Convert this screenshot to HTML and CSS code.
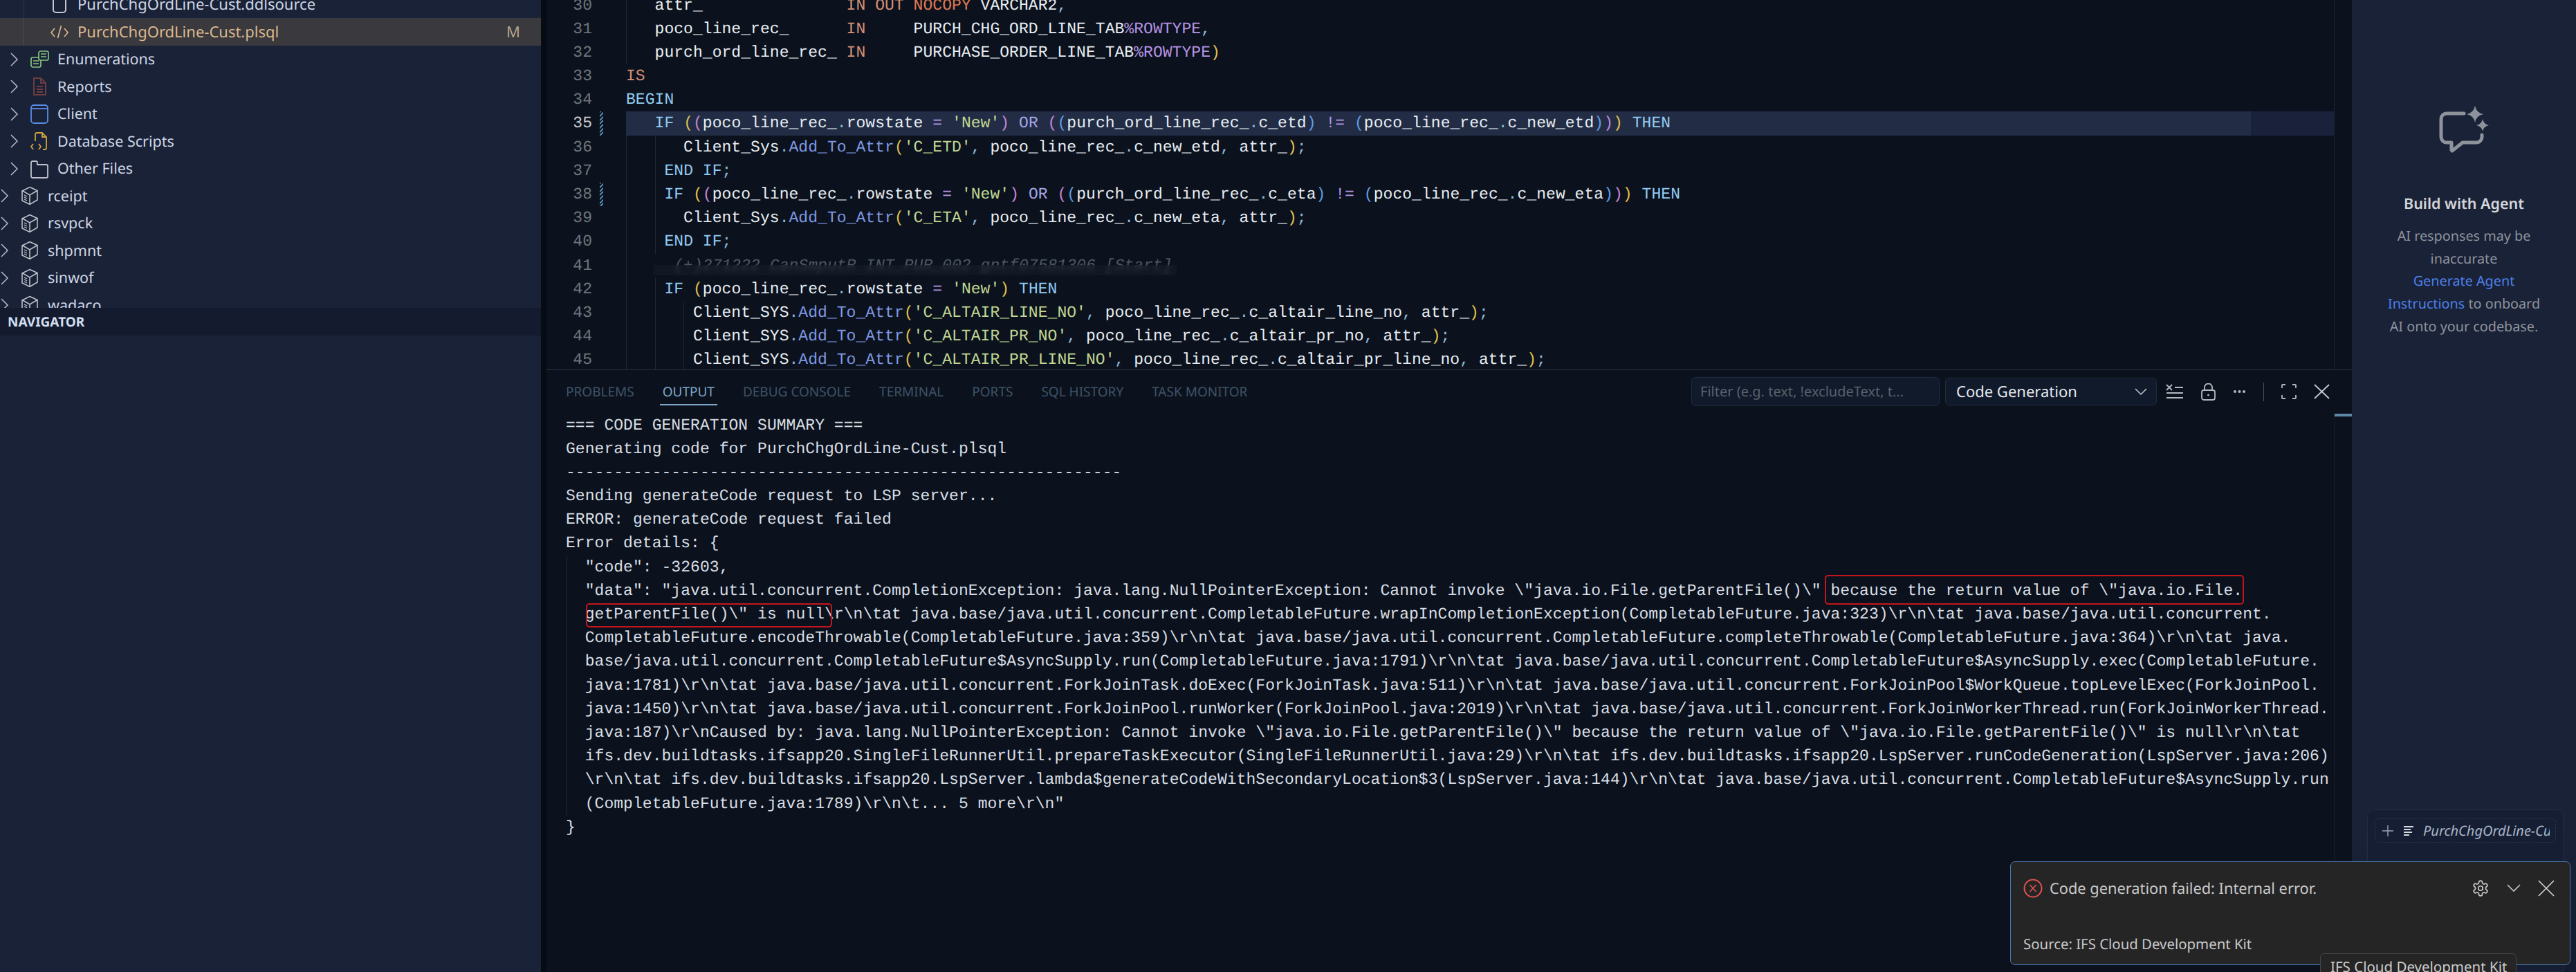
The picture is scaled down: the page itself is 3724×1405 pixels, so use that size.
FILE: index.html
```html
<!DOCTYPE html>
<html lang="en">
<head>
    <meta charset="UTF-8">
    <title>PurchChgOrdLine-Cust.plsql - Output</title>
    <link rel="stylesheet" href="styles.css">
</head>
<body>
    <svg class="icon-defs" width="0" height="0">
        <symbol id="chev" viewBox="0 0 14 20"><path d="M2 1l9 9-9 9" fill="none" stroke="currentColor" stroke-width="1.5"/></symbol>
        <symbol id="cube" viewBox="0 0 28 28" fill="none" stroke="currentColor" stroke-width="1.5"><path d="M14 1.500l11 5v13.500l-11 6.500-11-5.500v-14z"/><path d="M3 6.500l11 6.500 11-6.500M14 13v13.500"/><path d="M6 13l4 2M6 16l4 2M6 19l4 2" stroke-width="1.200"/></symbol>
    </svg>

    <div class="app">
        <!-- explorer -->
        <aside class="sidebar">
            <div class="tree">
                <div class="row file first"><svg class="tree-icon" viewBox="0 0 28 28"><path d="M5 -4v26a4 4 0 0 0 4 4h10a4 4 0 0 0 4-4v-26" fill="none" stroke="#c3c8d0" stroke-width="2"/></svg>PurchChgOrdLine-Cust.ddlsource</div>
                <div class="row file selected">
                    <svg class="tree-icon" viewBox="0 0 28 28" fill="none" stroke="#d9b68a" stroke-width="1.700"><path d="M7 9l-5 6 5 6M21 9l5 6-5 6M16.500 5l-5 18"/></svg>
                    <span>PurchChgOrdLine-Cust.plsql</span>
                    <span class="git-m">M</span>
                </div>
                <div class="row group">
                    <svg class="chev"><use href="#chev"/></svg>
                    <svg class="tree-icon" viewBox="0 0 28 28" fill="none" stroke="#86c47f" stroke-width="1.700"><rect x="2" y="11" width="14" height="14" rx="2.500"/><path d="M5 16h8M5 20h8"/><rect x="13" y="2" width="14" height="13" rx="2.500" fill="#1a2238"/><path d="M16 6h8M16 10h8"/></svg>
                    Enumerations
                </div>
                <div class="row group">
                    <svg class="chev"><use href="#chev"/></svg>
                    <svg class="tree-icon" viewBox="0 0 28 28" fill="none" stroke="#6f3c40" stroke-width="2"><path d="M6 2h10l7 7v17H6zM16 2v7h7M10 14h9M10 18h9M10 22h9"/></svg>
                    Reports
                </div>
                <div class="row group">
                    <svg class="chev"><use href="#chev"/></svg>
                    <svg class="tree-icon" viewBox="0 0 28 28" fill="none" stroke="#5a8ce8" stroke-width="1.800"><rect x="2" y="1" width="24" height="26" rx="4"/><path d="M2 6h24"/></svg>
                    Client
                </div>
                <div class="row group">
                    <svg class="chev"><use href="#chev"/></svg>
                    <svg class="tree-icon" viewBox="0 0 28 28" fill="none" stroke="#d0a43c" stroke-width="1.800"><path d="M8 14V4a2 2 0 0 1 2-2h8l6 6v16a2 2 0 0 1-2 2h-3M18 2v6h6M5 18l-3 4 3 4M13 18l3 4-3 4"/></svg>
                    Database Scripts
                </div>
                <div class="row group">
                    <svg class="chev"><use href="#chev"/></svg>
                    <svg class="tree-icon" viewBox="0 0 28 28" fill="none" stroke="#bfc3cb" stroke-width="1.800"><path d="M2 5a2 2 0 0 1 2-2h5a2 2 0 0 1 2 2v3h13a2 2 0 0 1 2 2v15a2 2 0 0 1-2 2H4a2 2 0 0 1-2-2z"/></svg>
                    Other Files
                </div>
                <div class="row"><svg class="chev"><use href="#chev"/></svg><svg class="tree-icon cube"><use href="#cube"/></svg>rceipt</div>
                <div class="row"><svg class="chev"><use href="#chev"/></svg><svg class="tree-icon cube"><use href="#cube"/></svg>rsvpck</div>
                <div class="row"><svg class="chev"><use href="#chev"/></svg><svg class="tree-icon cube"><use href="#cube"/></svg>shpmnt</div>
                <div class="row"><svg class="chev"><use href="#chev"/></svg><svg class="tree-icon cube"><use href="#cube"/></svg>sinwof</div>
                <div class="row"><svg class="chev"><use href="#chev"/></svg><svg class="tree-icon cube"><use href="#cube"/></svg>wadaco</div>
            </div>
            <div class="nav-header">NAVIGATOR</div>
        </aside>

        <main class="main">
            <section class="editor">
                <div class="lines">
                    <div class="line first-line"><span class="ln">30</span><span class="gm"></span><span class="code g0">   attr_               <span class="s">IN</span> <span class="s">OUT</span> <span class="o">NOCOPY</span> VARCHAR2<span class="d">,</span></span></div>
                    <div class="line"><span class="ln">31</span><span class="gm"></span><span class="code g0">   poco_line_rec_      <span class="s">IN</span>     PURCH_CHG_ORD_LINE_TAB<span class="p">%ROWTYPE</span><span class="d">,</span></span></div>
                    <div class="line"><span class="ln">32</span><span class="gm"></span><span class="code g0">   purch_ord_line_rec_ <span class="s">IN</span>     PURCHASE_ORDER_LINE_TAB<span class="p">%ROWTYPE</span><span class="y">)</span></span></div>
                    <div class="line"><span class="ln">33</span><span class="gm"></span><span class="code"><span class="s">IS</span></span></div>
                    <div class="line"><span class="ln">34</span><span class="gm"></span><span class="code"><span class="k">BEGIN</span></span></div>
                    <div class="line active"><span class="ln">35</span><span class="gm hatch"></span><span class="code">   <span class="k">IF</span> <span class="y">(</span><span class="v">(</span>poco_line_rec_<span class="d">.</span>rowstate <span class="p">=</span> <span class="st">'New'</span><span class="v">)</span> <span class="w">OR</span> <span class="v">(</span><span class="b">(</span>purch_ord_line_rec_<span class="d">.</span>c_etd<span class="b">)</span> <span class="p">!=</span> <span class="b">(</span>poco_line_rec_<span class="d">.</span>c_new_etd<span class="b">)</span><span class="v">)</span><span class="y">)</span> <span class="k">THEN</span></span></div>
                    <div class="line"><span class="ln">36</span><span class="gm"></span><span class="code g0 g1">      Client_Sys<span class="d">.</span><span class="f">Add_To_Attr</span><span class="y">(</span><span class="st">'C_ETD'</span><span class="d">,</span> poco_line_rec_<span class="d">.</span>c_new_etd<span class="d">,</span> attr_<span class="y">)</span><span class="d">;</span></span></div>
                    <div class="line"><span class="ln">37</span><span class="gm"></span><span class="code g0 g1">    <span class="k">END</span> <span class="k">IF</span><span class="d">;</span></span></div>
                    <div class="line"><span class="ln">38</span><span class="gm hatch"></span><span class="code g0 g1">    <span class="k">IF</span> <span class="y">(</span><span class="v">(</span>poco_line_rec_<span class="d">.</span>rowstate <span class="p">=</span> <span class="st">'New'</span><span class="v">)</span> <span class="w">OR</span> <span class="v">(</span><span class="b">(</span>purch_ord_line_rec_<span class="d">.</span>c_eta<span class="b">)</span> <span class="p">!=</span> <span class="b">(</span>poco_line_rec_<span class="d">.</span>c_new_eta<span class="b">)</span><span class="v">)</span><span class="y">)</span> <span class="k">THEN</span></span></div>
                    <div class="line"><span class="ln">39</span><span class="gm"></span><span class="code g0 g1">      Client_Sys<span class="d">.</span><span class="f">Add_To_Attr</span><span class="y">(</span><span class="st">'C_ETA'</span><span class="d">,</span> poco_line_rec_<span class="d">.</span>c_new_eta<span class="d">,</span> attr_<span class="y">)</span><span class="d">;</span></span></div>
                    <div class="line"><span class="ln">40</span><span class="gm"></span><span class="code g0 g1">    <span class="k">END</span> <span class="k">IF</span><span class="d">;</span></span></div>
                    <div class="line"><span class="ln">41</span><span class="gm"></span><span class="code g0 comment">     (+)271222 CanSmputR INT_PUR_002 gntf07581306 [Start]<span class="blur-band"></span></span></div>
                    <div class="line"><span class="ln">42</span><span class="gm"></span><span class="code g0 g1">    <span class="k">IF</span> <span class="y">(</span>poco_line_rec_<span class="d">.</span>rowstate <span class="p">=</span> <span class="st">'New'</span><span class="y">)</span> <span class="k">THEN</span></span></div>
                    <div class="line"><span class="ln">43</span><span class="gm"></span><span class="code g0 g1 g2">       Client_SYS<span class="d">.</span><span class="f">Add_To_Attr</span><span class="y">(</span><span class="st">'C_ALTAIR_LINE_NO'</span><span class="d">,</span> poco_line_rec_<span class="d">.</span>c_altair_line_no<span class="d">,</span> attr_<span class="y">)</span><span class="d">;</span></span></div>
                    <div class="line"><span class="ln">44</span><span class="gm"></span><span class="code g0 g1 g2">       Client_SYS<span class="d">.</span><span class="f">Add_To_Attr</span><span class="y">(</span><span class="st">'C_ALTAIR_PR_NO'</span><span class="d">,</span> poco_line_rec_<span class="d">.</span>c_altair_pr_no<span class="d">,</span> attr_<span class="y">)</span><span class="d">;</span></span></div>
                    <div class="line"><span class="ln">45</span><span class="gm"></span><span class="code g0 g1 g2">       Client_SYS<span class="d">.</span><span class="f">Add_To_Attr</span><span class="y">(</span><span class="st">'C_ALTAIR_PR_LINE_NO'</span><span class="d">,</span> poco_line_rec_<span class="d">.</span>c_altair_pr_line_no<span class="d">,</span> attr_<span class="y">)</span><span class="d">;</span></span></div>
                </div>
            </section>

            <section class="panel">
                <div class="panel-header">
                    <div class="tabs">
                        <span class="tab">Problems</span>
                        <span class="tab active">Output</span>
                        <span class="tab">Debug Console</span>
                        <span class="tab">Terminal</span>
                        <span class="tab">Ports</span>
                        <span class="tab">SQL History</span>
                        <span class="tab">Task Monitor</span>
                    </div>
                    <div class="filter">Filter (e.g. text, !excludeText, t...</div>
                    <div class="channel">
                        <span>Code Generation</span>
                        <svg width="18" height="11" viewBox="0 0 18 11"><path d="M1 1l8 8 8-8" fill="none" stroke="#c5c9d0" stroke-width="1.500"/></svg>
                    </div>
                    <div class="actions">
                        <svg width="26" height="22" viewBox="0 0 26 22" fill="none" stroke="#b4b8bf" stroke-width="1.800"><path d="M1 1l8 8M9 1l-8 8M13 5h12M1 13h24M1 20h24"/></svg>
                        <svg width="21" height="25" viewBox="0 0 21 25" fill="none" stroke="#b4b8bf" stroke-width="1.800"><rect x="1" y="10" width="19" height="14" rx="3"/><path d="M5 10V6a5.500 5.500 0 0 1 11 0v4"/><circle cx="10.500" cy="17" r="1.500" fill="#b4b8bf" stroke="none"/></svg>
                        <svg width="19" height="6" viewBox="0 0 19 6" fill="#b4b8bf"><circle cx="3" cy="3" r="2"/><circle cx="9.500" cy="3" r="2"/><circle cx="16" cy="3" r="2"/></svg>
                        <span class="sep"></span>
                        <svg width="22" height="22" viewBox="0 0 22 22" fill="none" stroke="#b4b8bf" stroke-width="1.800"><path d="M1 6V2a1 1 0 0 1 1-1h4M16 1h4a1 1 0 0 1 1 1v4M21 16v4a1 1 0 0 1-1 1h-4M6 21H2a1 1 0 0 1-1-1v-4"/></svg>
                        <svg width="23" height="22" viewBox="0 0 23 22" fill="none" stroke="#c5c9d0" stroke-width="1.800"><path d="M1 1l21 20M22 1L1 21"/></svg>
                    </div>
                </div>
                <div class="output">
                    <div class="out">=== CODE GENERATION SUMMARY ===</div>
                    <div class="out">Generating code for PurchChgOrdLine-Cust.plsql</div>
                    <div class="out">----------------------------------------------------------</div>
                    <div class="out">Sending generateCode request to LSP server...</div>
                    <div class="out">ERROR: generateCode request failed</div>
                    <div class="out">Error details: {</div>
                    <div class="out nest">  "code": -32603,</div>
                    <div class="out nest">  "data": "java.util.concurrent.CompletionException: java.lang.NullPointerException: Cannot invoke \"java.io.File.getParentFile()\" <span class="mark mark-a">because the return value of \"java.io.File.</span></div>
                    <div class="out nest">  <span class="mark mark-b">getParentFile()\" is null</span>\r\n\tat java.base/java.util.concurrent.CompletableFuture.wrapInCompletionException(CompletableFuture.java:323)\r\n\tat java.base/java.util.concurrent.</div>
                    <div class="out nest">  CompletableFuture.encodeThrowable(CompletableFuture.java:359)\r\n\tat java.base/java.util.concurrent.CompletableFuture.completeThrowable(CompletableFuture.java:364)\r\n\tat java.</div>
                    <div class="out nest">  base/java.util.concurrent.CompletableFuture$AsyncSupply.run(CompletableFuture.java:1791)\r\n\tat java.base/java.util.concurrent.CompletableFuture$AsyncSupply.exec(CompletableFuture.</div>
                    <div class="out nest">  java:1781)\r\n\tat java.base/java.util.concurrent.ForkJoinTask.doExec(ForkJoinTask.java:511)\r\n\tat java.base/java.util.concurrent.ForkJoinPool$WorkQueue.topLevelExec(ForkJoinPool.</div>
                    <div class="out nest">  java:1450)\r\n\tat java.base/java.util.concurrent.ForkJoinPool.runWorker(ForkJoinPool.java:2019)\r\n\tat java.base/java.util.concurrent.ForkJoinWorkerThread.run(ForkJoinWorkerThread.</div>
                    <div class="out nest">  java:187)\r\nCaused by: java.lang.NullPointerException: Cannot invoke \"java.io.File.getParentFile()\" because the return value of \"java.io.File.getParentFile()\" is null\r\n\tat</div>
                    <div class="out nest">  ifs.dev.buildtasks.ifsapp20.SingleFileRunnerUtil.prepareTaskExecutor(SingleFileRunnerUtil.java:29)\r\n\tat ifs.dev.buildtasks.ifsapp20.LspServer.runCodeGeneration(LspServer.java:206)</div>
                    <div class="out nest">  \r\n\tat ifs.dev.buildtasks.ifsapp20.LspServer.lambda$generateCodeWithSecondaryLocation$3(LspServer.java:144)\r\n\tat java.base/java.util.concurrent.CompletableFuture$AsyncSupply.run</div>
                    <div class="out nest">  (CompletableFuture.java:1789)\r\n\t... 5 more\r\n"</div>
                    <div class="out">}</div>
                </div>
                <span class="ruler-mark"></span>
            </section>
        </main>

        <!-- chat view -->
        <aside class="agent">
            <div class="agent-empty">
                <svg class="agent-icon" width="73" height="68" viewBox="0 0 73 68">
                    <path d="M36 11H11a8 8 0 0 0-8 8v26a8 8 0 0 0 8 8h7v11l1 1 15-12h20a8 8 0 0 0 8-8v-3" fill="none" stroke="#8e929b" stroke-width="5" stroke-linejoin="round" stroke-linecap="round"/>
                    <path d="M52 0q2 10 12 12-10 2-12 12-2-10-12-12 10-2 12-12zM63 19q1.500 7.500 9 9-7.500 1.500-9 9-1.500-7.500-9-9 7.500-1.500 9-9z" fill="#8e929b"/>
                </svg>
                <h2 class="agent-title">Build with Agent</h2>
                <p class="agent-text">AI responses may be inaccurate<br><a class="agent-link">Generate Agent Instructions</a> to onboard AI onto your codebase.</p>
            </div>
            <div class="chat-input">
                <div class="chip">
                    <svg width="18" height="18" viewBox="0 0 18 18"><path d="M9 1v16M1 9h16" stroke="#9aa3b2" stroke-width="1.400"/></svg>
                    <svg width="14" height="14" viewBox="0 0 14 14" fill="#d5d9e0"><rect x="0" y="0" width="14" height="2"/><rect x="0" y="4" width="10" height="2"/><rect x="0" y="8" width="12" height="2"/><rect x="0" y="12" width="8" height="2"/></svg>
                    <span class="chip-name">PurchChgOrdLine-Cust.plsql</span>
                </div>
            </div>
        </aside>

        <div class="toast">
            <div class="toast-head">
                <svg width="28" height="28" viewBox="0 0 28 28" fill="none" stroke="#e0524d" stroke-width="2"><circle cx="14" cy="14" r="12.500"/><path d="M9.500 9l9 10M18.500 9l-9 10" stroke-width="1.600"/></svg>
                <span class="toast-msg">Code generation failed: Internal error.</span>
                <svg class="gear" width="26" height="26" viewBox="0 0 24 24" fill="none" stroke="#c8c8c8" stroke-width="1.600"><path d="M12.220 2h-.44a2 2 0 0 0-2 2v.18a2 2 0 0 1-1 1.730l-.43.25a2 2 0 0 1-2 0l-.15-.08a2 2 0 0 0-2.730.73l-.22.38a2 2 0 0 0 .73 2.730l.15.1a2 2 0 0 1 1 1.720v.51a2 2 0 0 1-1 1.740l-.15.09a2 2 0 0 0-.73 2.730l.22.38a2 2 0 0 0 2.730.73l.15-.08a2 2 0 0 1 2 0l.43.25a2 2 0 0 1 1 1.730V20a2 2 0 0 0 2 2h.44a2 2 0 0 0 2-2v-.18a2 2 0 0 1 1-1.730l.43-.25a2 2 0 0 1 2 0l.15.08a2 2 0 0 0 2.730-.73l.22-.39a2 2 0 0 0-.73-2.730l-.15-.08a2 2 0 0 1-1-1.740v-.5a2 2 0 0 1 1-1.740l.15-.09a2 2 0 0 0 .73-2.730l-.22-.38a2 2 0 0 0-2.730-.73l-.15.08a2 2 0 0 1-2 0l-.43-.25a2 2 0 0 1-1-1.730V4a2 2 0 0 0-2-2z"/><circle cx="12" cy="12" r="3"/></svg>
                <svg width="20" height="12" viewBox="0 0 20 12"><path d="M1 1l9 9 9-9" fill="none" stroke="#c8c8c8" stroke-width="1.600"/></svg>
                <svg width="24" height="24" viewBox="0 0 24 24"><path d="M1 1l22 22M23 1L1 23" fill="none" stroke="#d0d0d0" stroke-width="1.700"/></svg>
            </div>
            <div class="toast-source">Source: IFS Cloud Development Kit</div>
        </div>
        <div class="tooltip">IFS Cloud Development Kit</div>
    </div>
</body>
</html>
```

FILE: styles.css
```css
* {
    margin: 0;
    padding: 0;
    box-sizing: border-box;
}

html, body {
    width: 100%;
    height: 100%;
    overflow: hidden;
    background-color: #0b121d;
    font-family: "Noto Sans", sans-serif;
    text-rendering: geometricPrecision;
}

.icon-defs {
    position: absolute;
}

.app {
    position: relative;
    display: flex;
    width: 3724px;
    height: 1405px;
    overflow: hidden;
}

/* Explorer */
.sidebar {
    flex: none;
    width: 790px;
    background-color: #1a2238;
    border-right: 8px solid #070b12;
}

.tree {
    height: 445px;
    overflow: hidden;
    position: relative;
}

.row {
    display: flex;
    align-items: center;
    height: 39.5px;
    font-size: 21.500px;
    color: #cdd6e4;
    white-space: nowrap;
}

.row.group {
    padding-left: 14px;
}

.row.file {
    height: 40px;
    padding-left: 72px;
    font-size: 22px;
    background: linear-gradient(#2e3648, #2e3648) 34px 0 / 1px 100% no-repeat;
}

.row.first {
    margin-top: -14px;
}

.row.selected {
    background: linear-gradient(#4a4f5c, #4a4f5c) 34px 0 / 1px 100% no-repeat, #39393e;
    color: #dcb88e;
}

.git-m {
    margin-left: auto;
    margin-right: 30px;
    color: #b3a68f;
}

.chev {
    flex: none;
    width: 14px;
    height: 20px;
    margin-right: 15px;
    color: #b4bbc8;
}

.tree-icon {
    flex: none;
    width: 28px;
    height: 28px;
    margin-right: 12px;
}

.cube {
    color: #c3c7cf;
}

.nav-header {
    height: 40px;
    padding-left: 11px;
    line-height: 40px;
    font-size: 19px;
    font-weight: 700;
    color: #d3dff0;
    background-color: #141b2e;
}

/* Editor */
.main {
    flex: 1;
    min-width: 0;
    display: flex;
    flex-direction: column;
}

.editor {
    height: 534px;
    overflow: hidden;
    background: linear-gradient(#1a2230, #1a2230) 2584px 0 / 1px 100% no-repeat;
}

.lines, .output {
    font-family: "Liberation Mono", monospace;
    font-size: 23px;
    letter-spacing: 0.05px;
}

.line {
    display: flex;
    width: 2584px;
    height: 34.2px;
    line-height: 34.2px;
    color: #e8edf3;
}

.first-line {
    margin-top: -9.5px;
}

.ln {
    flex: none;
    width: 66px;
    text-align: right;
    color: #6f757e;
}

.active .ln {
    color: #c9ccd1;
}

.gm {
    flex: none;
    width: 49px;
}

.hatch {
    background: repeating-linear-gradient(135deg, #4f86aa 0, #4f86aa 2px, transparent 2px, transparent 4px) 11px 0 / 5px 100% no-repeat;
}

.code {
    position: relative;
    flex: 1;
    min-width: 0;
    white-space: pre;
}

.active .code {
    background: linear-gradient(90deg, #222d45 2349px, #19223a 2349px);
}

.g0 { background: linear-gradient(#1e2736, #1e2736) 0 0 / 1px 100% no-repeat; }
.g0.g1 { background: linear-gradient(#1e2736, #1e2736) 0 0 / 1px 100% no-repeat, linear-gradient(#1e2736, #1e2736) 42px 0 / 1px 100% no-repeat; }
.g0.g1.g2 { background: linear-gradient(#1e2736, #1e2736) 0 0 / 1px 100% no-repeat, linear-gradient(#1e2736, #1e2736) 42px 0 / 1px 100% no-repeat, linear-gradient(#1e2736, #1e2736) 83px 0 / 1px 100% no-repeat; }

.s { color: #d68f74; }
.o { color: #e07a55; }
.p { color: #b594e4; }
.d { color: #8fb9dc; }
.k { color: #93cbf3; }
.w { color: #a8a6ea; }
.f { color: #7f98e2; }
.st { color: #c2d894; }
.y { color: #e3c04e; }
.v { color: #c585d6; }
.b { color: #5f9ee3; }

.comment {
    color: #4e5662;
    font-style: italic;
}

.blur-band {
    position: absolute;
    left: 40px;
    top: 16px;
    width: 756px;
    height: 15px;
    background-color: rgba(24, 30, 40, 0.55);
    backdrop-filter: blur(3px);
}

/* Output panel */
.panel {
    position: relative;
    flex: 1;
    min-height: 0;
    display: flex;
    flex-direction: column;
    border-top: 1px solid #2a3240;
}

.panel-header {
    flex: none;
    display: flex;
    align-items: center;
    height: 62.5px;
    padding: 0 32px 0 24px;
}

.tabs {
    display: flex;
    gap: 33px;
}

.tab {
    height: 39px;
    padding: 0 4px;
    line-height: 38px;
    font-size: 19px;
    text-transform: uppercase;
    color: #3f5268;
}

.tab.active {
    color: #7ea6c9;
    border-bottom: 2px solid #7ea6c9;
}

.filter, .channel {
    height: 42px;
    line-height: 40px;
    background-color: #111a2b;
    border: 1px solid #1f2a3e;
    border-radius: 6px;
}

.filter {
    width: 359px;
    margin-left: auto;
    padding-left: 12px;
    font-size: 20px;
    color: #59616d;
    overflow: hidden;
    white-space: nowrap;
}

.channel {
    display: flex;
    align-items: center;
    justify-content: space-between;
    width: 306px;
    height: 40px;
    margin-left: 8px;
    padding: 0 13px 0 15px;
    font-size: 22px;
    color: #e4e8ee;
}

.actions {
    display: flex;
    align-items: center;
    gap: 25px;
    margin-left: 13px;
}

.sep {
    width: 1px;
    height: 27px;
    background-color: #4a5260;
}

.output {
    flex: 1;
    width: 2585px;
    padding-left: 28px;
    border-right: 1px solid #161d29;
}

.out {
    height: 34.2px;
    line-height: 34.2px;
    color: #d9dee5;
    white-space: pre;
}

.out.nest {
    background: linear-gradient(#1f2837, #1f2837) 1px 0 / 1px 100% no-repeat;
}

.mark {
    position: relative;
    display: inline-block;
}

.mark::after {
    content: "";
    position: absolute;
    border: 2.500px solid #c3161c;
    border-radius: 5px;
}

.mark-a::after { inset: -6px -2px -3px -9px; }
.mark-b::after { inset: 1px -11px -2px 1px; }

.ruler-mark {
    position: absolute;
    top: 63px;
    right: 0;
    width: 25px;
    height: 4px;
    background-color: #5f87a8;
}

/* Chat view */
.agent {
    flex: none;
    width: 324px;
    display: flex;
    flex-direction: column;
    background: linear-gradient(#1a2238 85%, #141c30 100%);
}

.agent-empty {
    display: flex;
    flex-direction: column;
    align-items: center;
    flex: 1;
    min-height: 0;
    padding: 153px 46px 0;
    text-align: center;
}

.agent-title {
    margin-top: 59px;
    font-size: 21.500px;
    line-height: 30px;
    font-weight: 600;
    color: #d4d6da;
}

.agent-text {
    margin-top: 15px;
    font-size: 19.800px;
    line-height: 32.700px;
    color: #8e939c;
}

.agent-link {
    color: #4d80e8;
}

.chat-input {
    flex: none;
    height: 235px;
    margin: 0 18px 0 22px;
    padding: 12px 10px;
    background-color: #161e33;
    border: 1px solid #232c42;
    border-radius: 10px 10px 0 0;
}

.chip {
    display: flex;
    align-items: center;
    gap: 14px;
    height: 35px;
    padding: 0 8px 0 9px;
    border: 1px dashed #2b3449;
    border-radius: 6px;
    white-space: nowrap;
}

.chip svg {
    flex: none;
}

.chip-name {
    flex: 1;
    min-width: 0;
    overflow: hidden;
    font-size: 20px;
    font-style: italic;
    color: #a9b5c8;
}

/* Notification floats over everything */
.toast {
    position: absolute;
    left: 2906px;
    top: 1245px;
    width: 810px;
    height: 150px;
    padding: 22px 22px 0 18px;
    background-color: #252526;
    border: 1.500px solid #4a78ad;
    border-radius: 7px;
    color: #c9c9c9;
}

.toast-head {
    display: flex;
    align-items: center;
    height: 32px;
}

.toast-msg {
    margin-left: 10px;
    margin-right: auto;
    font-size: 21.800px;
}

.toast-head svg + svg {
    margin-left: 25px;
}

.toast-source {
    margin-top: 48px;
    font-size: 20.400px;
    line-height: 32px;
}

.tooltip {
    position: absolute;
    left: 3354px;
    top: 1378px;
    width: 284px;
    height: 50px;
    padding: 3px 0 0 14px;
    background-color: #252526;
    border: 1px solid #454545;
    border-radius: 6px;
    font-size: 20.500px;
    line-height: 32px;
    color: #cccccc;
    white-space: nowrap;
}
```
